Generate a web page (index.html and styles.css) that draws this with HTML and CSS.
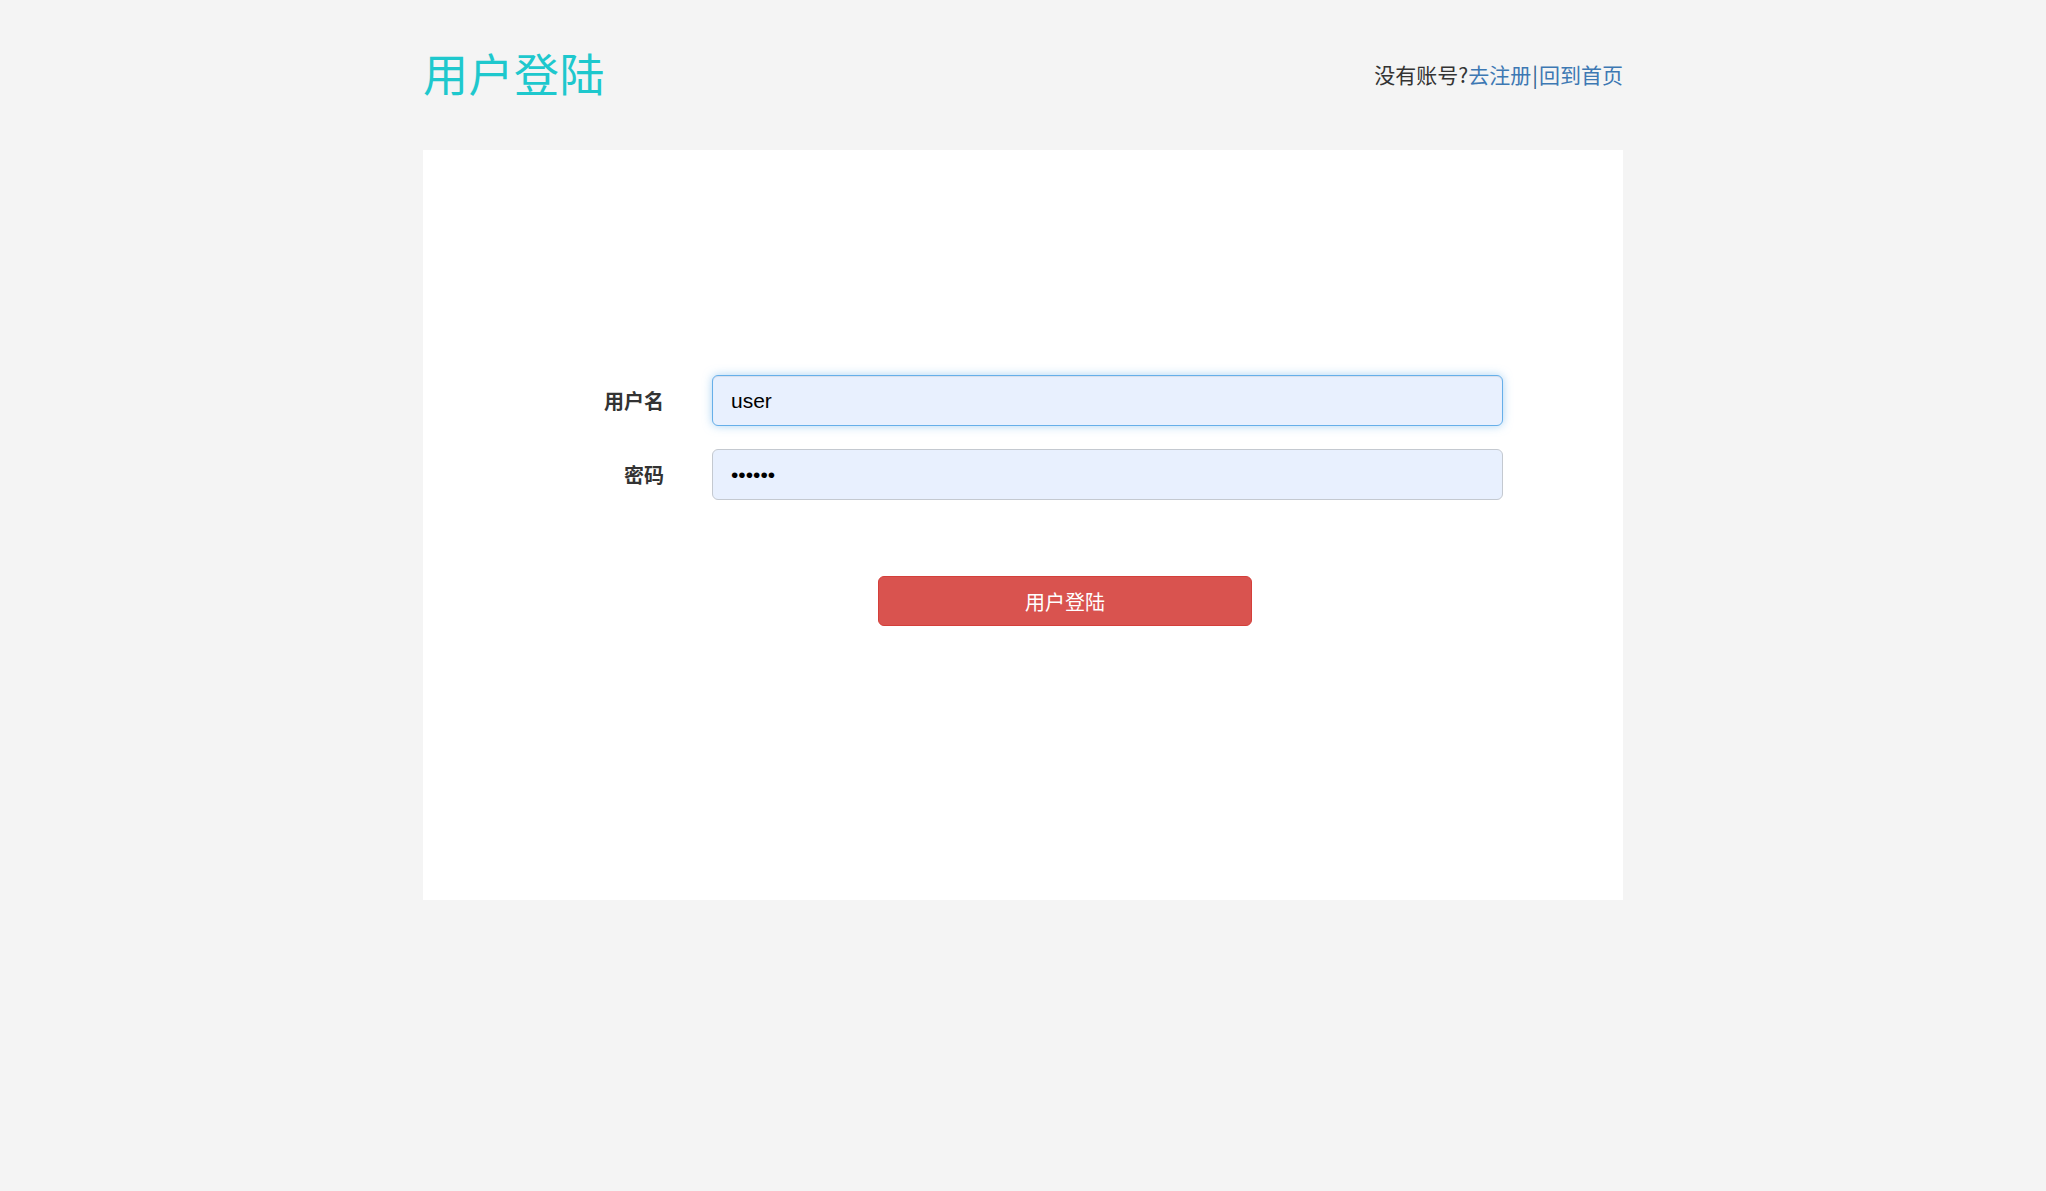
FILE: index.html
```html
<!DOCTYPE html>
<html lang="zh-CN">
<head>
<meta charset="utf-8">
<title>用户登陆</title>
<link rel="stylesheet" href="styles.css">
</head>
<body>
<div class="container">
  <header class="header">
    <h1 class="title">用户登陆</h1>
    <div class="links">没有账号?<a href="#" class="link">去注册</a><span class="sep">|</span><a href="#" class="link">回到首页</a></div>
  </header>
  <main class="panel">
    <form class="form">
      <div class="row">
        <label class="label">用户名</label>
        <input class="input input-focus" type="text" value="user">
      </div>
      <div class="row">
        <label class="label">密码</label>
        <input class="input" type="password" value="123456">
      </div>
      <div class="actions">
        <button type="button" class="btn">用户登陆</button>
      </div>
    </form>
  </main>
</div>
</body>
</html>
```
FILE: styles.css
```css
html, body {
  margin: 0;
  padding: 0;
  background: #f4f4f4;
  height: 100%;
}
body {
  font-family: "Liberation Sans", "Noto Sans CJK SC", sans-serif;
  color: #333;
}
.container {
  width: 1200px;
  margin: 0 auto;
}
.header {
  height: 150px;
  display: flex;
  align-items: center;
  justify-content: space-between;
}
.title {
  margin: 0;
  font-family: "Noto Sans CJK SC", sans-serif;
  font-weight: 400;
  font-size: 45px;
  line-height: 1;
  color: #1ec8cd;
  letter-spacing: 0.5px;
  position: relative;
  top: -3px;
}
.links {
  font-family: "Noto Sans CJK SC", sans-serif;
  font-size: 21px;
  color: #333;
  line-height: 1;
  position: relative;
  top: -1px;
}
.link {
  color: #3d78b3;
  text-decoration: none;
}
.sep {
  color: #2d5f8c;
  padding: 0 1px;
}
.panel {
  background: #fff;
  height: 750px;
  box-sizing: border-box;
  padding-top: 225px;
}
.row {
  display: grid;
  grid-template-columns: 241px 791px;
  column-gap: 48px;
  align-items: center;
  margin-bottom: 23px;
}
.label {
  text-align: right;
  font-family: "Noto Sans CJK SC", sans-serif;
  font-weight: 700;
  font-size: 20px;
  color: #333;
}
.input {
  box-sizing: border-box;
  height: 51px;
  width: 791px;
  padding: 0 18px;
  border: 1px solid #c4c9d0;
  border-radius: 6px;
  background: #e8f0fe;
  font-family: "Liberation Sans", sans-serif;
  font-size: 21px;
  color: #000;
  outline: none;
}
.input-focus {
  border-color: #66afe9;
  box-shadow: inset 0 1px 1px rgba(0,0,0,.075), 0 0 10px rgba(102,175,233,.55);
}
.actions {
  padding-top: 53px;
  padding-left: 455px;
}
.btn {
  width: 374px;
  height: 50px;
  border: 1px solid #d43f3a;
  border-radius: 6px;
  background: #d9534f;
  color: #fff;
  font-family: "Noto Sans CJK SC", sans-serif;
  font-size: 20px;
  cursor: pointer;
}
```
